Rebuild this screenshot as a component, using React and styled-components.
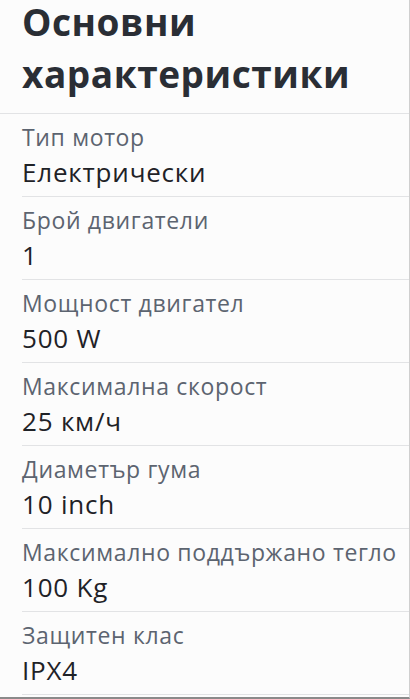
import React from "react";
import styled, { createGlobalStyle } from "styled-components";

const Global = createGlobalStyle`
  html, body { margin: 0; padding: 0; background: #fcfcfc; }
  body { font-family: "Open Sans", "Noto Sans", sans-serif; }
`;

const Panel = styled.div`
  width: 410px;
  height: 699px;
  box-sizing: border-box;
  overflow: hidden;
  background: #fcfcfc;
  border-right: 1px solid #cfcfcf;
  border-bottom: 2px solid #8a8a8a;
`;

const Header = styled.div`
  padding: 0 0 13px 22px;
  border-bottom: 1px solid #e2e3e5;
`;

const Title = styled.h2`
  margin: -4px 0 0;
  font-size: 37px;
  line-height: 52px;
  font-weight: 700;
  letter-spacing: 0.55px;
  color: #2a2e35;
`;

const List = styled.dl`
  margin: 0 0 0 22px;
  padding: 0;
`;

const Row = styled.div`
  padding: 8px 0 7px;
  border-bottom: 1px solid #e2e3e5;
  display: flex;
  flex-direction: column;
  gap: 3px;
`;

const Label = styled.dt`
  font-size: 23px;
  line-height: 30px;
  letter-spacing: 0.65px;
  color: #5c6470;
  white-space: nowrap;
`;

const Value = styled.dd`
  margin: 0;
  font-size: 26px;
  line-height: 34px;
  font-weight: 500;
  letter-spacing: 0.8px;
  color: #1f2227;
`;

const specs = [
  ["Тип мотор", "Електрически"],
  ["Брой двигатели", "1"],
  ["Мощност двигател", "500 W"],
  ["Максимална скорост", "25 км/ч"],
  ["Диаметър гума", "10 inch"],
  ["Максимално поддържано тегло", "100 Kg"],
  ["Защитен клас", "IPX4"],
];

export default function App() {
  return (
    <>
      <Global />
      <Panel>
        <Header>
          <Title>Основни характеристики</Title>
        </Header>
        <List>
          {specs.map(([k, v]) => (
            <Row key={k}>
              <Label>{k}</Label>
              <Value>{v}</Value>
            </Row>
          ))}
        </List>
      </Panel>
    </>
  );
}
